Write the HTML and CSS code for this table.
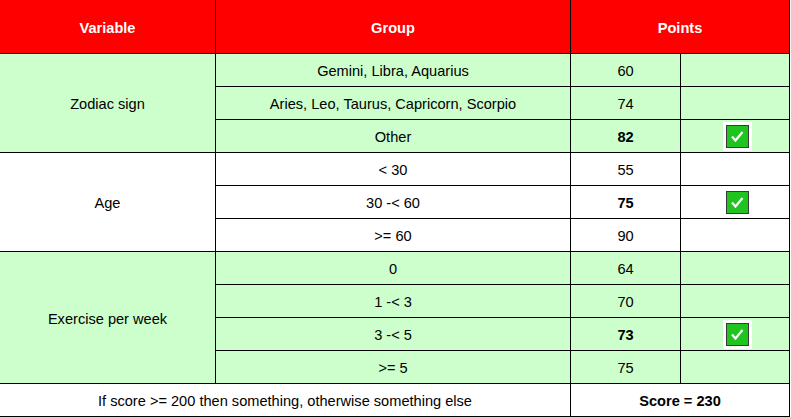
FILE: index.html
```html
<!DOCTYPE html>
<html>
<head>
<meta charset="utf-8">
<link rel="stylesheet" href="styles.css">
</head>
<body>
<div class="sheet">
  <div class="cell head">Variable</div>
  <div class="cell head">Group</div>
  <div class="cell head span2">Points</div>

  <div class="cell green var r3">Zodiac sign</div>
  <div class="cell green">Gemini, Libra, Aquarius</div>
  <div class="cell green">60</div>
  <div class="cell green"></div>
  <div class="cell green">Aries, Leo, Taurus, Capricorn, Scorpio</div>
  <div class="cell green">74</div>
  <div class="cell green"></div>
  <div class="cell green">Other</div>
  <div class="cell green bold">82</div>
  <div class="cell green"><span class="check"><svg width="23" height="23" viewBox="0 0 23 23"><rect x="0.5" y="0.5" width="22" height="22" fill="#1fc41f" stroke="#3a3a3a"/><path d="M6 11.5 L9.5 15.5 L16.5 7" fill="none" stroke="#fff" stroke-width="2.2"/></svg></span></div>

  <div class="cell white var r3">Age</div>
  <div class="cell white">&lt; 30</div>
  <div class="cell white">55</div>
  <div class="cell white"></div>
  <div class="cell white">30 -&lt; 60</div>
  <div class="cell white bold">75</div>
  <div class="cell white"><span class="check"><svg width="23" height="23" viewBox="0 0 23 23"><rect x="0.5" y="0.5" width="22" height="22" fill="#1fc41f" stroke="#3a3a3a"/><path d="M6 11.5 L9.5 15.5 L16.5 7" fill="none" stroke="#fff" stroke-width="2.2"/></svg></span></div>
  <div class="cell white">&gt;= 60</div>
  <div class="cell white">90</div>
  <div class="cell white"></div>

  <div class="cell green var r4">Exercise per week</div>
  <div class="cell green">0</div>
  <div class="cell green">64</div>
  <div class="cell green"></div>
  <div class="cell green">1 -&lt; 3</div>
  <div class="cell green">70</div>
  <div class="cell green"></div>
  <div class="cell green">3 -&lt; 5</div>
  <div class="cell green bold">73</div>
  <div class="cell green"><span class="check"><svg width="23" height="23" viewBox="0 0 23 23"><rect x="0.5" y="0.5" width="22" height="22" fill="#1fc41f" stroke="#3a3a3a"/><path d="M6 11.5 L9.5 15.5 L16.5 7" fill="none" stroke="#fff" stroke-width="2.2"/></svg></span></div>
  <div class="cell green">&gt;= 5</div>
  <div class="cell green">75</div>
  <div class="cell green"></div>

  <div class="cell white span2">If score &gt;= 200 then something, otherwise something else</div>
  <div class="cell white span2 bold">Score = 230</div>
</div>
</body>
</html>
```

FILE: styles.css
```css
html, body {
  margin: 0;
  padding: 0;
  background: #fff;
}

.sheet {
  display: grid;
  grid-template-columns: 215px 354px 109px 108px;
  grid-template-rows: 53px repeat(11, 32px);
  gap: 1px;
  width: 789px;
  padding: 0 1px 1px 0;
  background: #000;
  font-family: "Liberation Sans", Arial, sans-serif;
  font-size: 14.6px;
  color: #000;
}

.cell {
  display: flex;
  align-items: center;
  justify-content: center;
  white-space: nowrap;
  padding-top: 2px;
  box-sizing: border-box;
}

.head {
  background: #ff0000;
  color: #fff;
  font-weight: bold;
}

.green { background: #ccffcc; }
.white { background: #fff; }
.bold { font-weight: bold; }

.span2 { grid-column: span 2; }
.r3 { grid-row: span 3; }
.r4 { grid-row: span 4; }

.check {
  display: flex;
  align-items: center;
  justify-content: center;
  width: 29px;
  height: 29px;
  background: #fff;
  margin: 0 0 2px 5px;
}

.check svg { display: block; }
```
